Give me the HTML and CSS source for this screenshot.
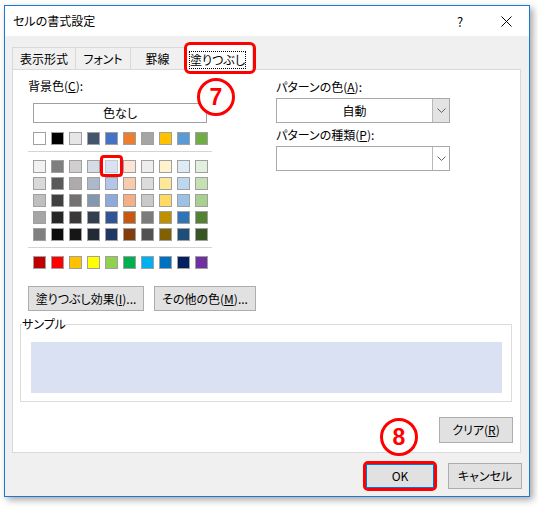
FILE: index.html
```html
<!DOCTYPE html>
<html lang="ja">
<head>
<meta charset="utf-8">
<title>セルの書式設定</title>
<link rel="stylesheet" href="styles.css">
</head>
<body>
<div class="win">
  <div class="titlebar">
    <span class="title">セルの書式設定</span>
    <span class="help">?</span>
    <span class="close"><svg width="11" height="11" viewBox="0 0 11 11"><path d="M0.5 0.5 L10.5 10.5 M10.5 0.5 L0.5 10.5" stroke="#000" stroke-width="1" fill="none"/></svg></span>
  </div>
  <div class="body">
    <div class="tabs">
      <div class="tab first t1">表示形式</div>
      <div class="tab t2">フォント</div>
      <div class="tab t3">罫線</div>
      <div class="tab sel"><span class="focus">塗りつぶし</span><span class="mark"></span></div>
    </div>
    <div class="panel">
      <div class="top">
        <div class="left">
          <div class="label">背景色(<u>C</u>):</div>
          <div class="nocolor">色なし</div>
          <div class="swrow r1">
            <span class="sw" style="background:#ffffff"></span>
            <span class="sw" style="background:#000000"></span>
            <span class="sw" style="background:#e7e6e6"></span>
            <span class="sw" style="background:#44546a"></span>
            <span class="sw" style="background:#4472c4"></span>
            <span class="sw" style="background:#ed7d31"></span>
            <span class="sw" style="background:#a5a5a5"></span>
            <span class="sw" style="background:#ffc000"></span>
            <span class="sw" style="background:#5b9bd5"></span>
            <span class="sw" style="background:#70ad47"></span>
          </div>
          <div class="sep"></div>
          <div class="block">
            <div class="swrow">
              <span class="sw" style="background:#f2f2f2"></span>
              <span class="sw" style="background:#7f7f7f"></span>
              <span class="sw" style="background:#d0cece"></span>
              <span class="sw" style="background:#d6dce4"></span>
              <span class="sw picked" style="background:#d9e1f2"></span>
              <span class="sw" style="background:#fce4d6"></span>
              <span class="sw" style="background:#ededed"></span>
              <span class="sw" style="background:#fff2cc"></span>
              <span class="sw" style="background:#ddebf7"></span>
              <span class="sw" style="background:#e2efda"></span>
            </div>
            <div class="swrow">
              <span class="sw" style="background:#d9d9d9"></span>
              <span class="sw" style="background:#595959"></span>
              <span class="sw" style="background:#aeaaaa"></span>
              <span class="sw" style="background:#acb9ca"></span>
              <span class="sw" style="background:#b4c6e7"></span>
              <span class="sw" style="background:#f8cbad"></span>
              <span class="sw" style="background:#dbdbdb"></span>
              <span class="sw" style="background:#ffe699"></span>
              <span class="sw" style="background:#bdd7ee"></span>
              <span class="sw" style="background:#c6e0b4"></span>
            </div>
            <div class="swrow">
              <span class="sw" style="background:#bfbfbf"></span>
              <span class="sw" style="background:#404040"></span>
              <span class="sw" style="background:#757171"></span>
              <span class="sw" style="background:#8497b0"></span>
              <span class="sw" style="background:#8ea9db"></span>
              <span class="sw" style="background:#f4b084"></span>
              <span class="sw" style="background:#c9c9c9"></span>
              <span class="sw" style="background:#ffd966"></span>
              <span class="sw" style="background:#9bc2e6"></span>
              <span class="sw" style="background:#a9d08e"></span>
            </div>
            <div class="swrow">
              <span class="sw" style="background:#a6a6a6"></span>
              <span class="sw" style="background:#262626"></span>
              <span class="sw" style="background:#3a3838"></span>
              <span class="sw" style="background:#333f4f"></span>
              <span class="sw" style="background:#305496"></span>
              <span class="sw" style="background:#c65911"></span>
              <span class="sw" style="background:#7b7b7b"></span>
              <span class="sw" style="background:#bf8f00"></span>
              <span class="sw" style="background:#2f75b5"></span>
              <span class="sw" style="background:#548235"></span>
            </div>
            <div class="swrow">
              <span class="sw" style="background:#808080"></span>
              <span class="sw" style="background:#0d0d0d"></span>
              <span class="sw" style="background:#161616"></span>
              <span class="sw" style="background:#222b35"></span>
              <span class="sw" style="background:#203764"></span>
              <span class="sw" style="background:#833c0c"></span>
              <span class="sw" style="background:#525252"></span>
              <span class="sw" style="background:#806000"></span>
              <span class="sw" style="background:#1f4e78"></span>
              <span class="sw" style="background:#375623"></span>
            </div>
          </div>
          <div class="sep"></div>
          <div class="swrow std">
            <span class="sw" style="background:#c00000"></span>
            <span class="sw" style="background:#ff0000"></span>
            <span class="sw" style="background:#ffc000"></span>
            <span class="sw" style="background:#ffff00"></span>
            <span class="sw" style="background:#92d050"></span>
            <span class="sw" style="background:#00b050"></span>
            <span class="sw" style="background:#00b0f0"></span>
            <span class="sw" style="background:#0070c0"></span>
            <span class="sw" style="background:#002060"></span>
            <span class="sw" style="background:#7030a0"></span>
          </div>
          <div class="btns">
            <div class="btn b1">塗りつぶし効果(<u>I</u>)...</div>
            <div class="btn b2">その他の色(<u>M</u>)...</div>
          </div>
        </div>
        <div class="right">
          <div class="label">パターンの色(<u>A</u>):</div>
          <div class="dd"><span class="val">自動</span><span class="arrow gray"><svg width="9" height="5" viewBox="0 0 9 5"><path d="M0.5 0.5 L4.5 4.5 L8.5 0.5" stroke="#606060" fill="none"/></svg></span></div>
          <div class="label l2">パターンの種類(<u>P</u>):</div>
          <div class="dd"><span class="val"></span><span class="arrow"><svg width="9" height="5" viewBox="0 0 9 5"><path d="M0.5 0.5 L4.5 4.5 L8.5 0.5" stroke="#606060" fill="none"/></svg></span></div>
        </div>
      </div>
      <fieldset class="sample">
        <legend>サンプル</legend>
        <div class="fill"></div>
      </fieldset>
      <div class="clearrow"><div class="btn clear">クリア(<u>R</u>)</div></div>
      <span class="circle c7">7</span>
    </div>
    <div class="footer">
      <div class="okwrap"><div class="btn ok">OK</div></div>
      <div class="btn cancel">キャンセル</div>
    </div>
    <span class="circle c8">8</span>
  </div>
</div>
</body>
</html>
```
FILE: styles.css
```css
*, *::before, *::after { box-sizing: border-box; }
html, body { margin: 0; padding: 0; }
body {
  width: 538px;
  height: 508px;
  overflow: hidden;
  background: #fff;
  font-family: "Noto Sans CJK JP", "Noto Sans", sans-serif;
  font-size: 12px;
  color: #000;
  font-feature-settings: "palt";
}
u { text-decoration: underline; text-underline-offset: 1px; }

.win {
  margin: 5px 0 0 4px;
  width: 526px;
  height: 492px;
  border: 1px solid #1c78d4;
  background: #f0f0f0;
  box-shadow: 3px 3px 7px rgba(0, 0, 0, 0.35);
  display: flex;
  flex-direction: column;
}
.titlebar {
  flex: none;
  height: 30px;
  background: #fff;
  display: flex;
  align-items: center;
}
.title { flex: 1; padding-left: 8px; line-height: 16px; }
.help, .close {
  width: 46px;
  height: 30px;
  display: flex;
  align-items: center;
  justify-content: center;
}
.help { font-size: 13px; }

.body {
  flex: 1;
  position: relative;
  padding: 10px 7px 0 7px;
}

.tabs {
  height: 23px;
  display: flex;
  align-items: flex-end;
  position: relative;
  z-index: 1;
}
.tab {
  height: 22px;
  border-top: 1px solid #d9d9d9;
  border-right: 1px solid #d9d9d9;
  background: #f0f0f0;
  display: flex;
  align-items: center;
  justify-content: center;
  line-height: 16px;
}
.tab.first { border-left: 1px solid #d9d9d9; }
.t1 { width: 64px; }
.t2 { width: 55px; }
.t3 { width: 54px; }
.tab.sel {
  position: relative;
  width: 68px;
  height: 27px;
  margin-bottom: -1px;
  background: #fff;
  border-left: 1px solid #d9d9d9;
  align-items: flex-start;
  justify-content: flex-start;
  padding: 7px 0 0 3px;
}
.focus {
  width: 57px;
  height: 18px;
  border: 1px dotted #000;
  text-align: center;
  line-height: 16px;
}
.mark {
  position: absolute;
  left: -2px;
  top: -2px;
  width: 72px;
  height: 32px;
  border: 3px solid #ff0000;
  border-radius: 6px;
}

.panel {
  position: relative;
  width: 509px;
  height: 384px;
  background: #fff;
  border: 1px solid #d9d9d9;
  padding: 8px 7px 0 15px;
}
.top { display: flex; }
.left { width: 248px; }
.right { width: 174px; }
.label { height: 16px; line-height: 16px; white-space: nowrap; }
.right .label { margin-top: 1px; }
.right .label.l2 { margin-top: 4px; }

.nocolor {
  margin: 9px 0 0 5px;
  width: 174px;
  height: 20px;
  border: 1px solid #a0a0a0;
  text-align: center;
  line-height: 18px;
}
.swrow { display: flex; gap: 5px; margin-left: 5px; height: 13px; }
.r1 { margin-top: 9px; }
.sep { width: 184px; height: 1px; background: #d4d4d4; margin-top: 6px; }
.block { margin-top: 8px; display: flex; flex-direction: column; gap: 4px; }
.std { margin-top: 8px; }
.sw {
  flex: none;
  position: relative;
  width: 13px;
  height: 13px;
  border: 1px solid #a0a0a0;
}
.sw.picked { z-index: 2; border-color: #c8c8c8; }
.sw.picked::after {
  content: "";
  position: absolute;
  left: -6px;
  top: -6px;
  width: 23px;
  height: 22px;
  border: 3px solid #ff0000;
  border-radius: 4px;
}

.btn {
  height: 25px;
  border: 1px solid #adadad;
  background: #e1e1e1;
  display: flex;
  align-items: center;
  justify-content: center;
  line-height: 16px;
  white-space: nowrap;
}
.btns { margin-top: 17px; display: flex; gap: 10px; }
.b1 { width: 116px; }
.b2 { width: 102px; }

.dd {
  margin-top: 3px;
  height: 25px;
  border: 1px solid #a8a8a8;
  background: #fff;
  display: flex;
}
.dd .val { flex: 1; text-align: center; line-height: 23px; }
.dd .arrow {
  width: 17px;
  border-left: 1px solid #b8b8b8;
  display: flex;
  align-items: center;
  justify-content: center;
}
.dd .arrow.gray { background: #e3e3e3; }

.sample {
  margin: 5px 0 0 -8px;
  width: 492px;
  padding: 0;
  border: 1px solid #dcdcdc;
}
.sample legend {
  padding: 0;
  margin-left: 1px;
  line-height: 16px;
}
.fill {
  margin: 10px 9px 8px 10px;
  height: 51px;
  background: #dae1f2;
}
.clearrow { display: flex; justify-content: flex-end; margin-top: 15px; }
.clear { width: 74px; height: 26px; }

.footer {
  margin-top: 8px;
  display: flex;
  justify-content: flex-end;
  align-items: center;
  gap: 11px;
}
.okwrap {
  width: 74px;
  height: 30px;
  border: 3px solid #ff0000;
  border-radius: 5px;
}
.ok {
  height: 24px;
  border: 1px solid #0078d7;
}
.cancel { width: 74px; height: 26px; }

.circle {
  position: absolute;
  width: 38px;
  height: 38px;
  border: 3px solid #ff0000;
  border-radius: 50%;
  color: #ff0000;
  font-family: "Liberation Sans", "Noto Sans", sans-serif;
  font-weight: bold;
  font-size: 23px;
  display: flex;
  align-items: center;
  justify-content: center;
  background: #fff;
}
.c7 { left: 184px; top: 8px; }
.c8 { left: 375px; top: 382px; }
```
